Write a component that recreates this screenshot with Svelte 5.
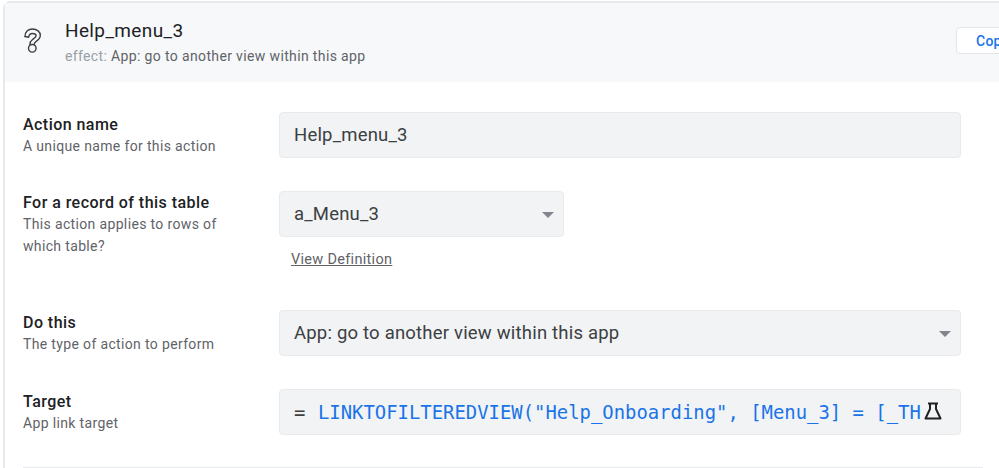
<script>
  let actionName = 'Help_menu_3';

  const rows = [
    { label: 'Action name', hint: ['A unique name for this action'], kind: 'input', value: actionName },
    {
      label: 'For a record of this table',
      hint: ['This action applies to rows of', 'which table?'],
      kind: 'select',
      value: 'a_Menu_3',
      narrow: true,
      link: 'View Definition'
    },
    { label: 'Do this', hint: ['The type of action to perform'], kind: 'select', value: 'App: go to another view within this app' },
    { label: 'Target', hint: ['App link target'], kind: 'formula' }
  ];
</script>

<div class="page">
  <section class="card">
    <header class="head">
      <svg class="help" width="20" height="26" viewBox="0 0 20 26" fill="none" stroke="#3c4043" stroke-width="1.400" stroke-linecap="round" stroke-linejoin="round">
        <path d="M2 8.500C2 4 5 1 9.500 1c4.500 0 7.800 2.800 7.800 6.300 0 3-1.900 4.600-3.800 5.800-1.300 .8-2.100 1.500-2.400 3.300" />
        <path d="M2 8.500l3.600 .8C6 7 7.500 5.500 9.500 5.500c2.300 0 3.600 1 3.600 2.300 0 1.700-2.200 2.700-3.800 3.900-1.500 1.100-2.300 2.500-2.400 4.800" />
        <circle cx="9.300" cy="20.300" r="3.800" />
      </svg>
      <div class="titles">
        <h1>{actionName}</h1>
        <p><span class="muted">effect:</span> App: go to another view within this app</p>
      </div>
      <button class="copy">Copy</button>
    </header>

    <div class="form">
      {#each rows as row}
        <div class="row">
          <div class="label">
            <strong>{row.label}</strong>
            {#each row.hint as line}
              <span>{line}</span>
            {/each}
          </div>
          <div class="control">
            {#if row.kind === 'input'}
              <div class="field">{row.value}</div>
            {:else if row.kind === 'select'}
              <div class="field select" class:narrow={row.narrow}>
                {row.value}
                <i class="caret"></i>
              </div>
              {#if row.link}
                <a class="def" href="#top">{row.link}</a>
              {/if}
            {:else}
              <div class="field formula">
                <span class="eq">=</span>
                <span class="expr">LINKTOFILTEREDVIEW("Help_Onboarding", [Menu_3] = [_TH</span>
                <svg class="flask" width="18" height="18" viewBox="0 0 18 18" fill="none" stroke="#202124" stroke-width="2" stroke-linejoin="round">
                  <path d="M4 1.500h10M6 1.500v5.500L1.500 16.500h15L12 7V1.500" />
                </svg>
              </div>
            {/if}
          </div>
        </div>
      {/each}
      <div class="rule"></div>
    </div>
  </section>
</div>

<style>
  :global(body) {
    margin: 0;
    background: #fff;
    overflow: hidden;
  }

  .page {
    width: 999px;
    height: 468px;
    overflow: hidden;
    font-family: Roboto, "Liberation Sans", sans-serif;
  }

  .card {
    width: 1100px;
    margin-left: 3px;
    margin-top: 1px;
    border: 2px solid #e8e9eb;
    border-right: 0;
    border-bottom: 0;
    border-top-left-radius: 8px;
    height: 520px;
  }

  .head {
    height: 79px;
    background: #f7f8fa;
    display: flex;
    align-items: flex-start;
    padding-left: 18px;
    position: relative;
  }

  .help {
    margin-top: 25px;
  }

  .titles {
    margin-left: 22px;
    padding-top: 16px;
  }

  h1 {
    margin: 0;
    font-size: 19px;
    font-weight: 400;
    line-height: 24px;
    color: #202124;
    letter-spacing: 0.37px;
  }

  .titles p {
    margin: 4px 0 0;
    font-size: 14px;
    line-height: 18px;
    color: #5f6368;
    letter-spacing: 0.36px;
  }

  .muted {
    color: #9aa0a6;
  }

  .copy {
    position: absolute;
    left: 951px;
    top: 24px;
    width: 120px;
    height: 27px;
    border: 1px solid #e3e5e8;
    border-radius: 4px;
    background: #fff;
    color: #1a73e8;
    font: 500 14px Roboto, sans-serif;
    letter-spacing: 0.25px;
    text-align: left;
    padding: 0 0 0 19px;
  }

  .form {
    padding: 30px 0 0 18px;
  }

  .row {
    display: flex;
    margin-bottom: 33px;
  }

  .row:nth-child(2) {
    margin-bottom: 40px;
  }

  .row:nth-child(2) .label {
    padding-top: 1px;
  }

  .label {
    width: 256px;
    display: flex;
    flex-direction: column;
    padding-top: 2px;
  }

  .label strong {
    font-size: 16px;
    font-weight: 500;
    line-height: 22px;
    color: #202124;
    letter-spacing: 0.45px;
  }

  .label span {
    font-size: 14px;
    line-height: 21.500px;
    color: #5f6368;
    letter-spacing: 0.35px;
  }

  .control {
    width: 682px;
  }

  .field {
    height: 46px;
    box-sizing: border-box;
    background: #f1f3f4;
    border: 1px solid #e8eaed;
    border-radius: 4px;
    padding-left: 14px;
    font-size: 18.500px;
    letter-spacing: 0.2px;
    line-height: 44px;
    color: #3c4043;
    position: relative;
    white-space: nowrap;
  }

  .narrow {
    width: 285px;
  }

  .caret {
    position: absolute;
    right: 9px;
    top: 20px;
    border-left: 6px solid transparent;
    border-right: 6px solid transparent;
    border-top: 6px solid #80868b;
  }

  .def {
    display: block;
    margin: 13px 0 0 12px;
    font-size: 14.500px;
    line-height: 20px;
    color: #5f6368;
    letter-spacing: 0.3px;
    text-decoration: underline;
  }

  .formula {
    display: flex;
    align-items: center;
    font-family: "DejaVu Sans Mono", "Liberation Mono", monospace;
    font-size: 18.900px;
    letter-spacing: 0;
    overflow: hidden;
  }

  .eq {
    color: #3c4043;
    width: 24px;
  }

  .expr {
    color: #1a73e8;
    font-weight: 400;
  }

  .flask {
    margin-left: 3px;
    margin-bottom: 2px;
    flex: none;
  }

  .rule {
    height: 1px;
    width: 960px;
    background: #e8eaed;
    margin-top: -1px;
  }
</style>
